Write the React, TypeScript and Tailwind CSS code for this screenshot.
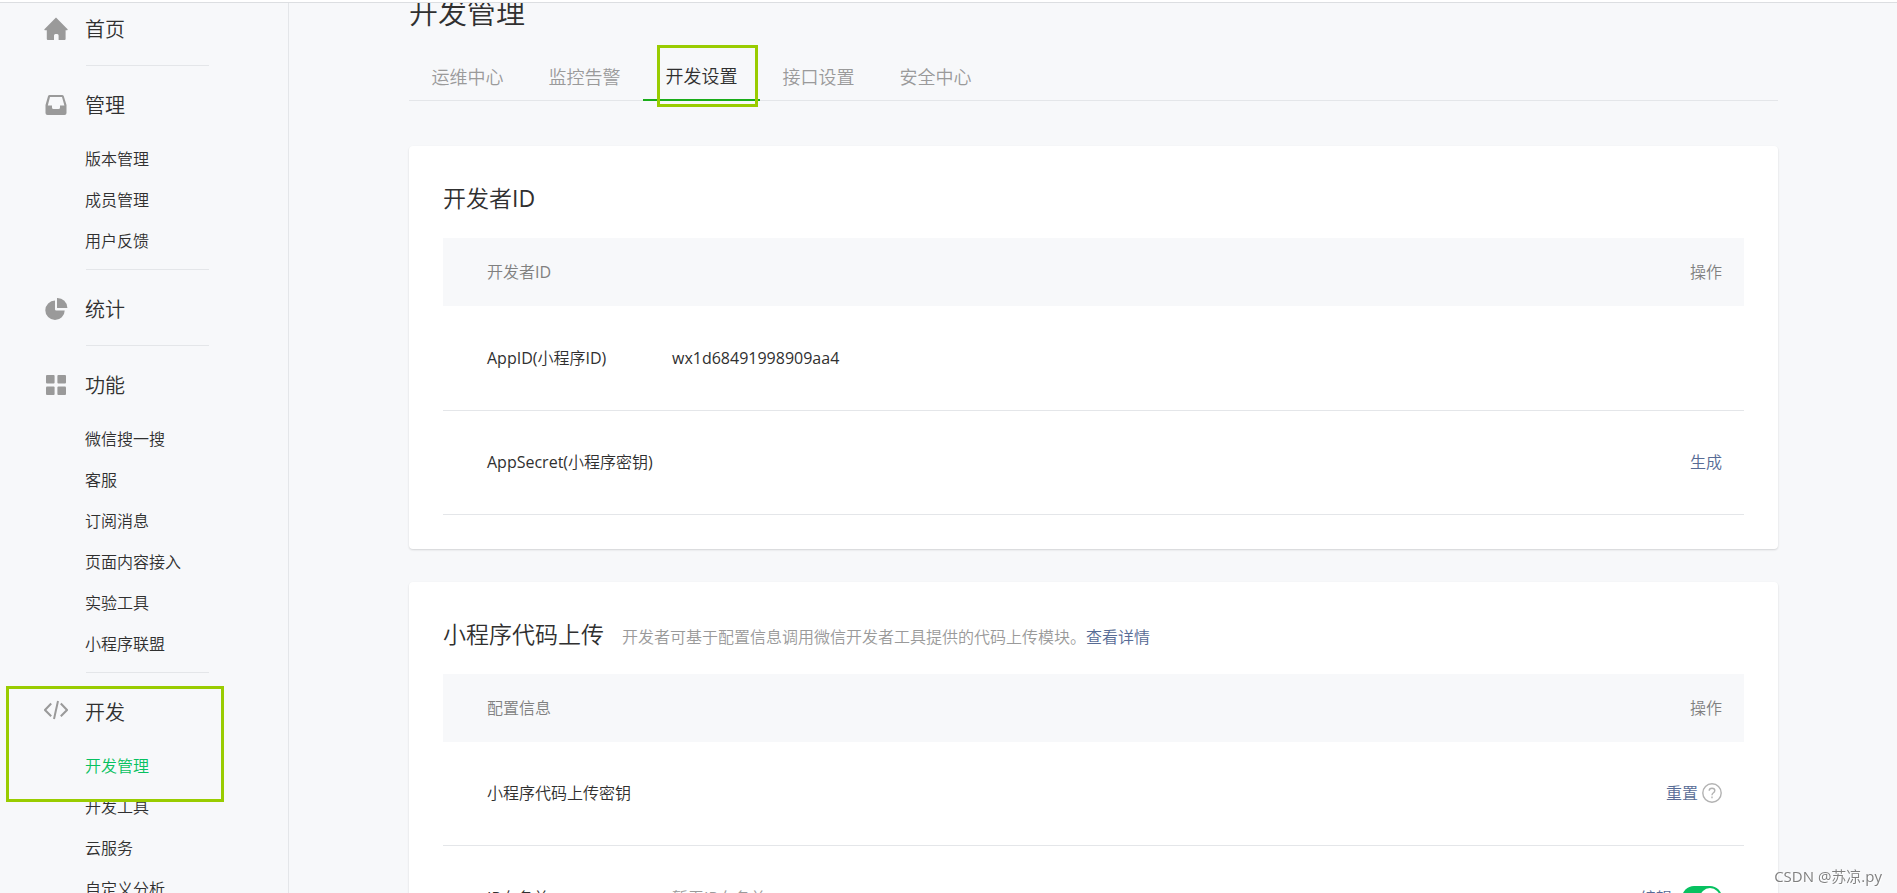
import React from 'react';

type Section = {
  title: string;
  icon: React.ReactNode;
  items?: string[];
  marked?: boolean;
};

const HomeIcon = () => (
  <svg width="24" height="24" viewBox="0 0 24 24" fill="#9a9a9a">
    <path d="M12 0.5 L23.6 12.2 Q24 13.2 23 13.2 H21.6 V22 Q21.6 23 20.6 23 H14.6 V18.6 Q14.6 17 13.2 17 H11.4 Q10 17 10 18.6 V23 H3.8 Q2.8 23 2.8 22 V13.2 H1 Q0 13.2 0.4 12.2 Z" />
  </svg>
);

const InboxIcon = () => (
  <svg width="24" height="24" viewBox="0 0 24 24">
    <path
      fill="#9a9a9a"
      fillRule="evenodd"
      d="M5.6 2 H18 Q19.4 2 19.8 3.2 L22.5 12 V20 Q22.5 22 20.5 22 H3.5 Q1.5 22 1.5 20 V12 L4 3.2 Q4.4 2 5.6 2 Z M6 4 L3.8 12.6 H8 V14.5 Q8 16 9.5 16 H14.5 Q16 16 16 14.5 V12.6 H20.4 L18 4 Z"
    />
  </svg>
);

const PieIcon = () => (
  <svg width="24" height="24" viewBox="0 0 24 24" fill="#9a9a9a">
    <path d="M11 3.6 A9.7 9.7 0 1 0 20.7 13.4 H11.8 Q11 13.4 11 12.6 Z" />
    <path d="M13 1 A10 10 0 0 1 23.4 11 H13.6 Q13 11 13 10.4 Z" />
  </svg>
);

const GridIcon = () => (
  <svg width="24" height="24" viewBox="0 0 24 24" fill="#9a9a9a">
    <rect x="2" y="2" width="8.6" height="8.6" rx="1" />
    <rect x="13.4" y="2" width="8.6" height="8.6" rx="1" />
    <rect x="2" y="13.4" width="8.6" height="8.6" rx="1" />
    <rect x="13.4" y="13.4" width="8.6" height="8.6" rx="1" />
  </svg>
);

const CodeIcon = () => (
  <svg width="24" height="24" viewBox="1 1 24 24" fill="none" stroke="#9a9a9a" strokeWidth="2">
    <path d="M8.2 4.5 L2 11 L8.2 17.2" />
    <path d="M17.8 4.5 L24 11 L17.8 17.2" />
    <path d="M15 2 L11 20" />
  </svg>
);

const sections: Section[] = [
  { title: '首页', icon: <HomeIcon /> },
  { title: '管理', icon: <InboxIcon />, items: ['版本管理', '成员管理', '用户反馈'] },
  { title: '统计', icon: <PieIcon /> },
  {
    title: '功能',
    icon: <GridIcon />,
    items: ['微信搜一搜', '客服', '订阅消息', '页面内容接入', '实验工具', '小程序联盟'],
  },
  {
    title: '开发',
    icon: <CodeIcon />,
    items: ['开发管理', '开发工具', '云服务', '自定义分析'],
    marked: true,
  },
];

const tabs = ['运维中心', '监控告警', '开发设置', '接口设置', '安全中心'];

const Sidebar: React.FC = () => (
  <nav className="w-[289px] shrink-0 border-r border-[#e4e6e9] pt-3">
    {sections.map(({ title, icon, items, marked }, i) => (
      <div key={title} className={i > 0 ? 'relative pt-[25px]' : 'relative'}>
        <a href="#" className="flex items-center text-xl leading-[30px]">
          <span className="mb-0.5 ml-11 w-[41px]">{icon}</span>
          {title}
        </a>
        {items ? (
          <ul className="mt-[18px] mb-[7px] ml-[85px]">
            {items.map((item) => (
              <li key={item} className="leading-[41px]">
                <a href="#" className={item === '开发管理' ? 'text-[#07c160]' : ''}>{item}</a>
              </li>
            ))}
          </ul>
        ) : (
          <div className="h-5" />
        )}
        <hr className="ml-[86px] w-[123px] border-[#e4e6e9]" />
        {marked && (
          <div className="pointer-events-none absolute top-[13px] left-[6px] h-[116px] w-[218px] border-3 border-[#99cc00]" />
        )}
      </div>
    ))}
  </nav>
);

const Tabs: React.FC = () => (
  <div role="tablist" className="flex border-b border-[#e4e6e9] text-lg">
    {tabs.map((tab) => {
      const active = tab === '开发设置';
      return (
        <button
          key={tab}
          role="tab"
          aria-selected={active}
          className={
            active
              ? 'relative -mb-px w-[117px] border-b-2 border-[#1aad19] pt-2 pb-2 leading-[30px]'
              : 'w-[117px] pt-2 pb-2 leading-[30px] text-[#9a9a9a]'
          }
        >
          {tab}
          {active && (
            <span className="pointer-events-none absolute -top-2 left-[14px] h-[62px] w-[101px] border-3 border-[#99cc00]" />
          )}
        </button>
      );
    })}
  </div>
);

type CardProps = {
  title: string;
  desc?: React.ReactNode;
  head: string;
  children: React.ReactNode;
};

const Card: React.FC<CardProps> = ({ title, desc, head, children }) => (
  <section className="rounded-[4px] bg-white px-[34px] pt-[34px] pb-[34px] shadow-[0_1px_2px_rgba(0,0,0,0.15)]">
    <div className="mb-[22px] flex items-baseline gap-[18px]">
      <h2 className="text-[23px] leading-9">{title}</h2>
      {desc}
    </div>
    <table className="w-full text-left">
      <thead className="bg-[#f7f8fa] text-[#808080]">
        <tr className="h-[68px]">
          <th className="w-[229px] pl-11 font-normal whitespace-nowrap">{head}</th>
          <th />
          <th className="w-[160px] pr-[22px] text-right font-normal">操作</th>
        </tr>
      </thead>
      <tbody>{children}</tbody>
    </table>
  </section>
);

type RowProps = {
  name: string;
  value?: string;
  muted?: boolean;
  children?: React.ReactNode;
};

const Row: React.FC<RowProps> = ({ name, value, muted, children }) => (
  <tr className="h-[104px] border-b border-[#e4e6e9]">
    <td className="pl-11 whitespace-nowrap">{name}</td>
    <td className={muted ? 'text-[#9a9a9a]' : ''}>{value}</td>
    <td className="pr-[22px]">
      <div className="flex items-center justify-end">{children}</div>
    </td>
  </tr>
);

const App: React.FC = () => {
  return (
    <div className="flex h-screen flex-col overflow-hidden bg-[#f7f8fa] font-['Open_Sans','Noto_Sans_CJK_SC_DemiLight','Noto_Sans_CJK_SC',sans-serif] text-base font-normal text-[#303030]">
      <header className="h-[3px] shrink-0 border-b border-[#dcdee1] bg-white" />
      <div className="flex min-h-0 flex-1 overflow-hidden">
        <Sidebar />
        <main className="min-w-0 flex-1 overflow-hidden pr-[119px] pl-[120px]">
          <h1 className="-mt-[10px] mb-5 text-[29px] leading-10">开发管理</h1>
          <Tabs />
          <div className="mt-[45px] flex flex-col gap-[33px]">
            <Card title="开发者ID" head="开发者ID">
              <Row name="AppID(小程序ID)" value="wx1d68491998909aa4" />
              <Row name="AppSecret(小程序密钥)">
                <button className="text-[#576b95]">生成</button>
              </Row>
            </Card>
            <Card
              title="小程序代码上传"
              desc={
                <p className="text-[#9a9a9a]">
                  开发者可基于配置信息调用微信开发者工具提供的代码上传模块。
                  <a href="#" className="text-[#576b95]">查看详情</a>
                </p>
              }
              head="配置信息"
            >
              <Row name="小程序代码上传密钥">
                <button className="text-[#576b95]">重置</button>
                <button aria-label="帮助" className="ml-1">
                  <svg width="20" height="20" viewBox="0 0 20 20" fill="none" stroke="#b2b2b2" strokeWidth="1.4">
                    <circle cx="10" cy="10" r="9.2" />
                    <path d="M7.2 7.8 Q7.2 5.2 10 5.2 Q12.8 5.2 12.8 7.6 Q12.8 9 11.2 10 Q10 10.8 10 12.2" />
                    <path d="M10 13.6 V15.2" />
                  </svg>
                </button>
              </Row>
              <Row name="IP白名单" value="暂无IP白名单" muted>
                <button className="text-[#576b95]">编辑</button>
                <input
                  type="checkbox"
                  defaultChecked
                  aria-label="IP白名单"
                  className="relative ml-[10px] h-6 w-10 appearance-none rounded-full bg-[#07c160] before:absolute before:top-[2px] before:right-[2px] before:size-5 before:rounded-full before:bg-white"
                />
              </Row>
            </Card>
          </div>
        </main>
      </div>
      <div className="fixed right-[15px] bottom-[5px] text-[15px] leading-6 text-[#808080] [text-shadow:1px_1px_1px_#ffffff]">CSDN @苏凉.py</div>
    </div>
  );
};

export default App;
